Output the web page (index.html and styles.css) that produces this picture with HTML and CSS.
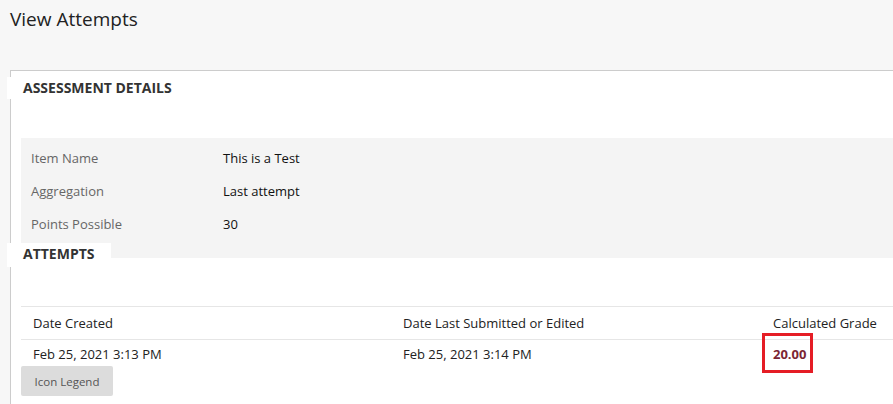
FILE: index.html
```html
<!DOCTYPE html>
<html lang="en">
<head>
  <meta charset="UTF-8">
  <title>View Attempts</title>
  <link rel="stylesheet" href="styles.css">
</head>
<body>
  <h1 class="page-title">View Attempts</h1>

  <div class="panel">
    <h2 class="section-head">Assessment Details</h2>
    <div class="details">
      <div class="detail-row">
        <span class="detail-label">Item Name</span>
        <span class="detail-value">This is a Test</span>
      </div>
      <div class="detail-row">
        <span class="detail-label">Aggregation</span>
        <span class="detail-value">Last attempt</span>
      </div>
      <div class="detail-row">
        <span class="detail-label">Points Possible</span>
        <span class="detail-value">30</span>
      </div>
    </div>

    <h2 class="section-head attempts-head">Attempts</h2>
    <div class="attempts">
      <div class="attempts-row head">
        <span>Date Created</span>
        <span>Date Last Submitted or Edited</span>
        <span>Calculated Grade</span>
      </div>
      <div class="attempts-row">
        <span>Feb 25, 2021 3:13 PM</span>
        <span>Feb 25, 2021 3:14 PM</span>
        <span><span class="grade">20.00</span></span>
      </div>
    </div>

    <button class="legend-btn" type="button">Icon Legend</button>
  </div>
</body>
</html>
```

FILE: styles.css
```css
body {
  margin: 0;
  background: #f7f7f7;
  font-family: "Open Sans", "Liberation Sans", sans-serif;
  color: #222;
  font-size: 13px;
}

.page-title {
  margin: 0;
  padding: 6px 10px 0;
  font-size: 19px;
  font-weight: normal;
  line-height: 27px;
  color: #222;
}

.panel {
  margin: 37px 0 0 10px;
  background: #fff;
  border-top: 1px solid #ccc;
  border-left: 1px solid #ccc;
  padding-bottom: 10px;
}

.section-head {
  margin: 6px 0 0 -4px;
  padding: 0 0 1px 16px;
  width: 88px;
  background: #fff;
  font-size: 14px;
  font-weight: bold;
  text-transform: uppercase;
  line-height: 21px;
  color: #333;
  white-space: nowrap;
  position: relative;
}

.details {
  margin: 39px 0 0 10px;
  background: #f4f4f4;
  padding: 3px 0 18px;
}

.detail-row {
  display: grid;
  grid-template-columns: 192px 1fr;
  height: 33px;
  align-items: center;
  padding-left: 10px;
}

.detail-label {
  color: #666;
}

.detail-value {
  color: #111;
}

.attempts-head {
  margin-top: -15px;
  line-height: 22px;
  padding-bottom: 2px;
}

.attempts {
  margin: 39px 0 0 10px;
}

.attempts-row {
  display: grid;
  grid-template-columns: 370px 370px 1fr;
  align-items: center;
  height: 27px;
}

.attempts-row span {
  padding-left: 12px;
}

.attempts-row.head {
  height: 32px;
  border-top: 1px solid #e6e6e6;
  border-bottom: 1px solid #e6e6e6;
}

.attempts-row .grade {
  padding-left: 0;
  font-weight: bold;
  color: #7b2533;
  position: relative;
}

.grade::after {
  content: "";
  position: absolute;
  left: -11px;
  right: -7px;
  top: -12px;
  bottom: -10px;
  border: 3px solid #e51d25;
}

.legend-btn {
  display: block;
  margin: -1px 0 0 10px;
  width: 92px;
  height: 30px;
  border: none;
  border-radius: 2px;
  background: #dcdcdc;
  color: #555;
  font-family: inherit;
  font-size: 11.5px;
  padding: 0;
}
```
